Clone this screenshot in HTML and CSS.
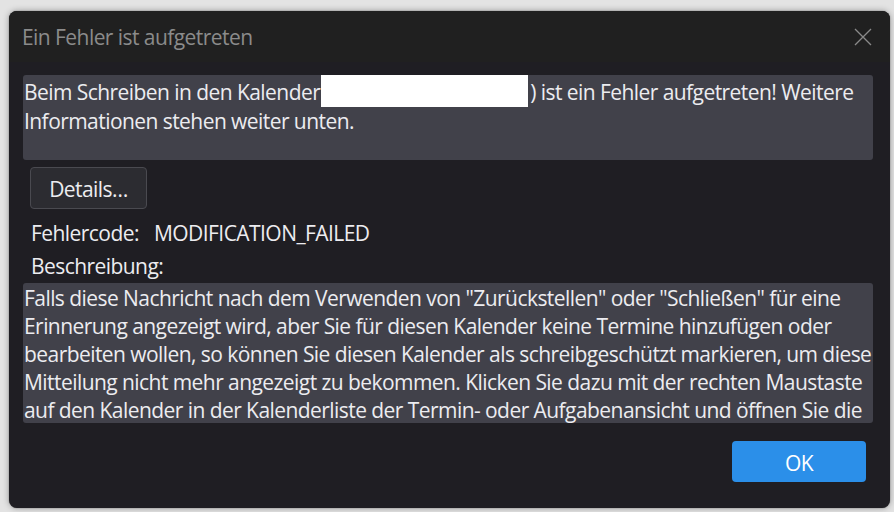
FILE: index.html
```html
<!DOCTYPE html>
<html lang="de">
<head>
<meta charset="utf-8">
<title>Ein Fehler ist aufgetreten</title>
<link rel="stylesheet" href="styles.css">
</head>
<body>
<div class="window">
  <div class="titlebar">
    <span class="title">Ein Fehler ist aufgetreten</span>
    <button class="close" aria-label="Schließen">
      <svg width="18" height="18" viewBox="0 0 18 18"><path d="M1 1 L17 17 M17 1 L1 17" stroke="#8a8a8a" stroke-width="1.3" fill="none"/></svg>
    </button>
  </div>
  <div class="content">
    <div class="message">Beim Schreiben in den Kalender<span class="redact"></span>) ist ein Fehler aufgetreten! Weitere<br>Informationen stehen weiter unten.</div>
    <button class="details">Details…</button>
    <div class="row code"><span class="label">Fehlercode:</span><span class="value">MODIFICATION_FAILED</span></div>
    <div class="row desc-label">Beschreibung:</div>
    <div class="description">Falls diese Nachricht nach dem Verwenden von "Zurückstellen" oder "Schließen" für eine<br>Erinnerung angezeigt wird, aber Sie für diesen Kalender keine Termine hinzufügen oder<br>bearbeiten wollen, so können Sie diesen Kalender als schreibgeschützt markieren, um diese<br>Mitteilung nicht mehr angezeigt zu bekommen. Klicken Sie dazu mit der rechten Maustaste<br>auf den Kalender in der Kalenderliste der Termin- oder Aufgabenansicht und öffnen Sie die</div>
    <div class="actions"><button class="ok">OK</button></div>
  </div>
</div>
</body>
</html>
```

FILE: styles.css
```css
* { box-sizing: border-box; }
html, body { margin: 0; padding: 0; }
body {
  width: 894px;
  height: 512px;
  background: #e3e3e3;
  overflow: hidden;
  font-family: "Open Sans", "Noto Sans", sans-serif;
  font-size: 21px;
  letter-spacing: -0.56px;
  line-height: 28px;
  padding: 11px 4px 0 9px;
}
.window {
  width: 881px;
  height: 497px;
  background: #1f1e23;
  border-radius: 8px;
  box-shadow: 0 0 6px rgba(0,0,0,0.35), 0 0 1px rgba(0,0,0,0.6);
  overflow: hidden;
  color: #ececf0;
}
.titlebar {
  height: 51px;
  background: #202020;
  display: flex;
  align-items: flex-start;
  justify-content: space-between;
  padding: 12px 18px 0 13px;
}
.title { color: #8b8b8b; }
.close {
  background: none;
  border: 0;
  padding: 0;
  margin-top: 5px;
  width: 18px;
  height: 18px;
  display: flex;
}
.content { padding: 13px 17px 0 14px; }
.message {
  height: 85px;
  background: #41414a;
  border-radius: 3px;
  padding: 3px 2px 0 1px;
}
.redact {
  display: inline-block;
  width: 207px;
  height: 32px;
  margin: -3px 2px 0 1px;
  vertical-align: -7px;
  background: #ffffff;
}
button {
  font: inherit;
  letter-spacing: inherit;
  color: inherit;
}
.details {
  display: block;
  margin: 7px 0 0 7px;
  width: 117px;
  height: 42px;
  padding: 1px 0 0;
  background: #2c2c31;
  border: 1px solid #4a4a50;
  border-radius: 4px;
  color: #ececf0;
}
.row { padding-left: 8px; }
.code { display: flex; margin-top: 10px; }
.label { width: 123px; }
.desc-label { margin-top: 5px; }
.description {
  margin-top: 3px;
  height: 140px;
  background: #41414a;
  border-radius: 3px;
  padding: 1px 2px 0 1px;
  overflow: hidden;
  white-space: nowrap;
}
.actions {
  display: flex;
  justify-content: flex-end;
  margin-top: 18px;
  padding-right: 7px;
}
.ok {
  width: 134px;
  height: 41px;
  background: #2b8fe9;
  border: 0;
  border-radius: 4px;
  color: #ffffff;
  padding: 2px 0 0;
}
```
